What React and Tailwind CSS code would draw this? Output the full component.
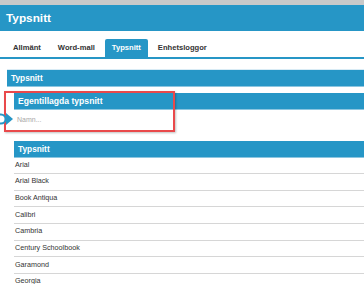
const FONTS = [
  'Arial',
  'Arial Black',
  'Book Antiqua',
  'Calibri',
  'Cambria',
  'Century Schoolbook',
  'Garamond',
  'Georgia',
];

const TABS = ['Allmänt', 'Word-mall', 'Typsnitt', 'Enhetsloggor'];

function Bar({ children, className = '' }) {
  return (
    <div
      className={`flex h-[17px] items-center border-b border-[#8cc6e0] bg-[#2696c6] font-bold text-white ${className}`}
    >
      {children}
    </div>
  );
}

export default function App() {
  return (
    <div className="relative h-[284px] w-[364px] overflow-hidden bg-white font-['Liberation_Sans',Arial,sans-serif] text-[#333]">
      <div className="h-[5px] bg-[#c9c9c9]" />
      <div className="flex h-[26px] items-center bg-[#2696c6] px-[6px] pt-[1px] text-[11.8px] font-bold text-white">
        Typsnitt
      </div>

      <div className="flex h-[28px] items-end gap-[3px] border-b-2 border-[#2696c6] pl-[6px]">
        {TABS.map((t) => (
          <div
            key={t}
            className={
              t === 'Typsnitt'
                ? 'flex h-[18px] items-center rounded-t-[2px] bg-[#2696c6] px-[7px] text-[7.6px] font-bold text-white'
                : 'flex h-[18px] items-center px-[7px] text-[7.6px] font-bold text-[#333]'
            }
          >
            {t}
          </div>
        ))}
      </div>

      <div className="ml-[7px] mt-[10px] border-t border-[#d8ebf5]">
        <Bar className="pl-[4px] text-[8.3px]">Typsnitt</Bar>

        <div className="ml-[7px]">
          <Bar className="mt-[6px] pl-[4px] text-[8.6px]">Egentillagda typsnitt</Bar>
          <div className="flex h-[21px] items-center pl-[3px] text-[7px] text-[#a8a8a8]">Namn...</div>

          <Bar className="mt-[10px] pl-[4px] text-[8.3px]">Typsnitt</Bar>
          {FONTS.map((f, i) => (
            <div
              key={f}
              className={`flex ${i === 0 ? 'h-[16px]' : 'h-[16.67px]'} items-center border-b border-[#d6d6d6] pl-[1px] text-[7.2px] text-[#333]`}
            >
              {f}
            </div>
          ))}
        </div>
      </div>

      {/* annotation box */}
      <div className="absolute left-[4px] top-[91px] h-[41px] w-[171px] border-2 border-[#e9494b] shadow-[1px_1px_2px_rgba(0,0,0,0.25)]" />

      <svg className="absolute left-0 top-[112px]" width="14" height="14" viewBox="0 0 14 14">
        <circle cx="1" cy="7" r="4.5" fill="white" stroke="#2696c6" strokeWidth="2" />
        <path d="M6 1 L13 7 L6 13 Z" fill="#2696c6" />
      </svg>
    </div>
  );
}
